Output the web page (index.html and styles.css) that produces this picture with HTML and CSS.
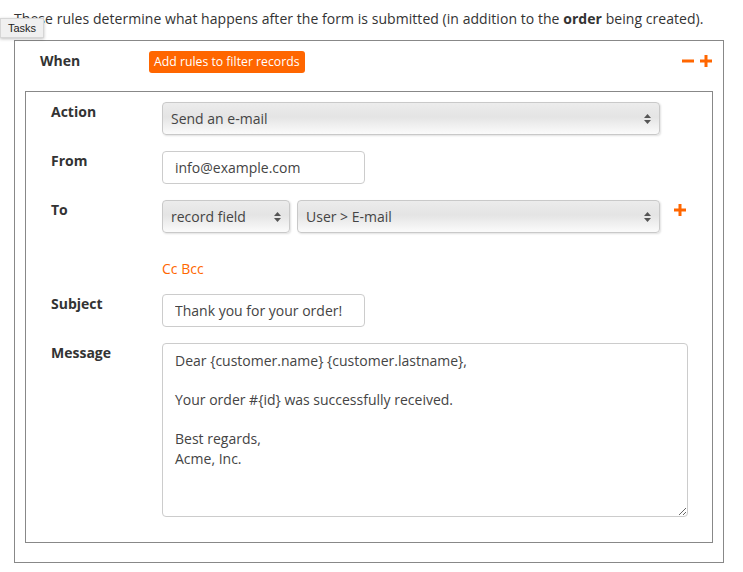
FILE: index.html
```html
<!DOCTYPE html>
<html>
<head>
<meta charset="utf-8">
<link rel="stylesheet" href="styles.css">
</head>
<body>
<p class="intro">These rules determine what happens after the form is submitted (in addition to the <b>order</b> being created).</p>
<div class="tooltip">Tasks</div>
<div class="rules">
  <div class="when">
    <div class="label">When</div>
    <button class="btn">Add rules to filter records</button>
    <div class="signs">
      <svg width="12" height="12" viewBox="0 0 12 12"><rect x="0" y="4.5" width="12" height="3" fill="#f60"/></svg>
      <svg width="12" height="12" viewBox="0 0 12 12"><rect x="0" y="4.5" width="12" height="3" fill="#f60"/><rect x="4.5" y="0" width="3" height="12" fill="#f60"/></svg>
    </div>
  </div>
  <div class="action-box">
    <div class="row">
      <div class="label">Action</div>
      <div class="ctrl">
        <div class="select w-action"><span>Send an e-mail</span><svg class="arr" width="7" height="12" viewBox="0 0 7 12"><path d="M3.5 1 L7 5 L0 5 Z M3.5 11 L7 7 L0 7 Z" fill="#555"/></svg></div>
      </div>
    </div>
    <div class="row">
      <div class="label">From</div>
      <div class="ctrl"><input class="input" type="text" value="info@example.com"></div>
    </div>
    <div class="row">
      <div class="label">To</div>
      <div class="ctrl to">
        <div class="select w-field"><span>record field</span><svg class="arr" width="7" height="12" viewBox="0 0 7 12"><path d="M3.5 1 L7 5 L0 5 Z M3.5 11 L7 7 L0 7 Z" fill="#555"/></svg></div>
        <div class="select w-user"><span>User &gt; E-mail</span><svg class="arr" width="7" height="12" viewBox="0 0 7 12"><path d="M3.5 1 L7 5 L0 5 Z M3.5 11 L7 7 L0 7 Z" fill="#555"/></svg></div>
        <svg class="add" width="12" height="12" viewBox="0 0 12 12"><rect x="0" y="4.5" width="12" height="3" fill="#f60"/><rect x="4.5" y="0" width="3" height="12" fill="#f60"/></svg>
      </div>
    </div>
    <div class="row cc-row">
      <div class="label"></div>
      <div class="ctrl"><span class="cc">Cc Bcc</span></div>
    </div>
    <div class="row">
      <div class="label">Subject</div>
      <div class="ctrl"><input class="input" type="text" value="Thank you for your order!"></div>
    </div>
    <div class="row">
      <div class="label">Message</div>
      <div class="ctrl"><textarea class="msg">Dear {customer.name} {customer.lastname},

Your order #{id} was successfully received.

Best regards,
Acme, Inc.</textarea></div>
    </div>
  </div>
</div>
</body>
</html>
```

FILE: styles.css
```css
* { box-sizing: border-box; }
body {
  margin: 0;
  font-family: "Open Sans", "Noto Sans", sans-serif;
  font-size: 14px;
  color: #333;
  background: #fff;
  position: relative;
}
.intro {
  margin: 0;
  padding: 9px 0 0 14px;
  line-height: 20px;
  height: 40px;
  letter-spacing: 0.05px;
}
.intro b { font-weight: 700; }
.tooltip {
  position: absolute;
  left: 0;
  top: 18px;
  width: 44px;
  height: 20px;
  background: #f0f0f0;
  border: 1px solid #d6d6d6;
  box-shadow: 0 1px 3px rgba(0,0,0,0.25);
  font-family: "Liberation Sans", Arial, sans-serif;
  font-size: 11px;
  line-height: 18px;
  text-align: center;
  color: #222;
}
.rules {
  margin-left: 14px;
  width: 710px;
  height: 523px;
  border: 1px solid #888;
  padding: 10px 10px 0 10px;
}
.when {
  display: flex;
  align-items: flex-start;
  padding-left: 15px;
  height: 40px;
}
.when .label {
  width: 109px;
  font-weight: 700;
  line-height: 20px;
}
.btn {
  height: 22px;
  background: #f60;
  color: #fff;
  border: none;
  border-radius: 3px;
  font-family: "Open Sans", sans-serif;
  font-size: 12.25px;
  padding: 0 5px;
  line-height: 22px;
}
.signs {
  margin-left: auto;
  display: flex;
  gap: 6px;
  margin-top: 4px;
  margin-right: 1px;
}
.signs svg { display: block; }
.action-box {
  border: 1px solid #888;
  height: 452px;
  padding: 10px 0 0 25px;
}
.row {
  display: grid;
  grid-template-columns: 111px 1fr;
  margin-bottom: 16px;
}
.row .label {
  font-weight: 700;
  line-height: 20px;
}
.select {
  height: 33px;
  border: 1px solid #c9c9c9;
  border-radius: 4px;
  background: linear-gradient(to bottom, #ececec 0%, #e4e4e4 45%, #fbfbfb 100%);
  box-shadow: 1px 1px 2px rgba(0,0,0,0.12);
  display: flex;
  align-items: center;
  padding: 0 8px 0 8px;
  color: #444;
}
.select span { flex: 1; }
.select .arr { display: block; }
.w-action { width: 498px; }
.w-field { width: 128px; }
.w-user { width: 363px; }
.to { display: flex; align-items: flex-start; }
.to .w-user { margin-left: 7px; }
.to .add { margin-left: 14px; margin-top: 4px; }
.input {
  width: 203px;
  height: 33px;
  border: 1px solid #ccc;
  border-radius: 4px;
  padding: 0 12px;
  font-family: "Open Sans", sans-serif;
  font-size: 14px;
  color: #444;
  background: #fff;
  display: block;
}
.cc-row { padding-top: 10px; margin-bottom: 15px; }
.cc { color: #f60; line-height: 20px; display: block; }
.msg {
  display: block;
  width: 526px;
  height: 174px;
  border: 1px solid #ccc;
  border-radius: 4px;
  padding: 7px 12px;
  font-family: "Open Sans", sans-serif;
  font-size: 14px;
  line-height: 19.5px;
  color: #444;
  resize: both;
}
```
